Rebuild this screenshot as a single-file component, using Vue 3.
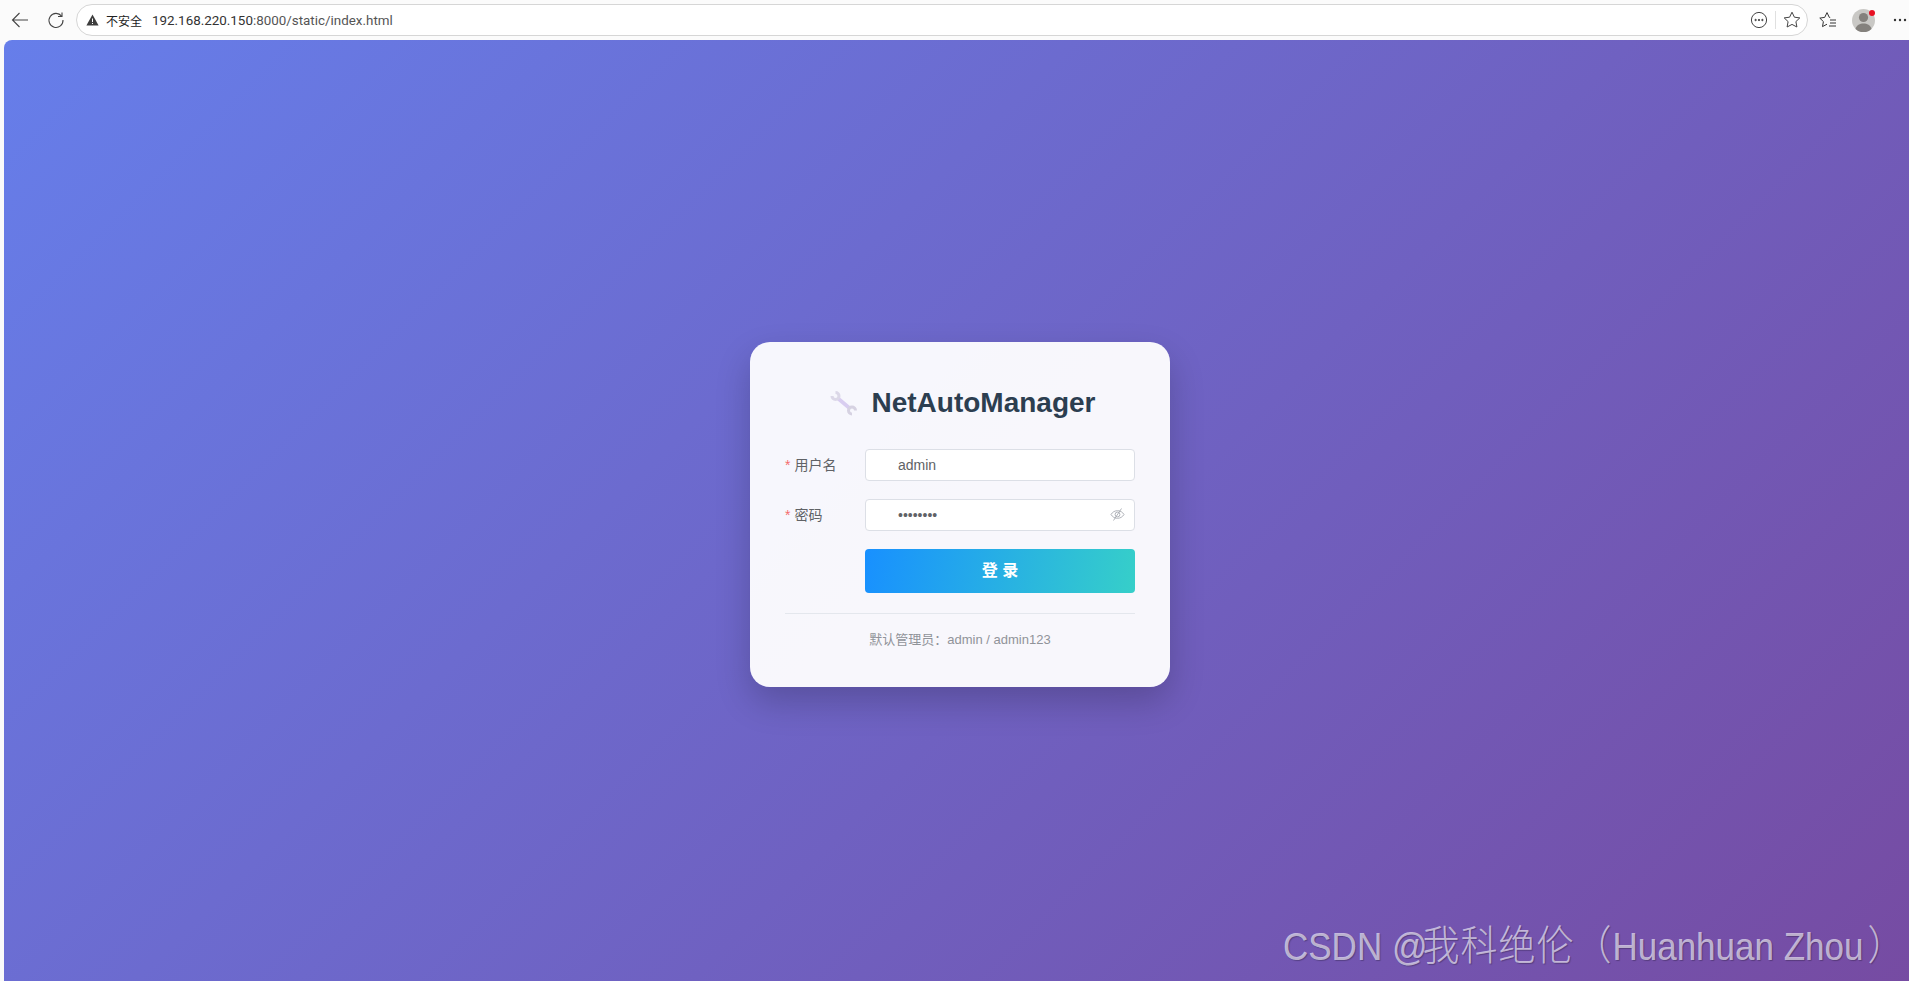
<script setup>
const fields = [
  { label: '用户名', type: 'text', value: 'admin' },
  { label: '密码', type: 'password', value: 'admin123', eye: true },
]
</script>

<template>
  <div class="window">
    <header class="toolbar">
      <button class="tool back" aria-label="后退">
        <svg width="20" height="20" viewBox="0 0 20 20" fill="none" stroke="#444" stroke-width="1.1"><path d="M18 10H2.500M9.500 3l-7 7 7 7"/></svg>
      </button>
      <button class="tool reload" aria-label="刷新">
        <svg width="18" height="18" viewBox="0 0 18 18" fill="none" stroke="#444" stroke-width="1.1"><path d="M14.600 5.200A7 7 0 1 0 16 9"/><path d="M15 1.500v4h-4"/></svg>
      </button>
      <div class="address">
        <svg class="warn" width="13" height="12" viewBox="0 0 13 12"><path d="M6.500.5 12.600 11.500H.4z" fill="#3d3d3d"/><path d="M6.500 4.500v3.500M6.500 9v1" stroke="#fff" stroke-width="1"/></svg>
        <span class="insecure">不安全</span>
        <span class="url">192.168.220.150<span class="port">:8000/static/index.html</span></span>
        <span class="spacer"></span>
        <svg class="addr-icon" width="18" height="18" viewBox="0 0 18 18" fill="none" stroke="#444" stroke-width="1"><circle cx="9" cy="9" r="7.600"/><circle cx="5.600" cy="9" r=".7" fill="#444"/><circle cx="9" cy="9" r=".7" fill="#444"/><circle cx="12.400" cy="9" r=".7" fill="#444"/></svg>
        <span class="sep"></span>
        <svg class="addr-icon" width="18" height="18" viewBox="0 0 18 18" fill="none" stroke="#444" stroke-width="1"><path d="M9 1.200l2.400 5 5.400.7-3.900 3.700 1 5.400L9 13.400l-4.900 2.600 1-5.400-3.900-3.700 5.400-.7z"/></svg>
      </div>
      <button class="tool fav" aria-label="收藏夹">
        <svg width="18" height="18" viewBox="0 0 18 18" fill="none" stroke="#333" stroke-width="1"><path d="M11.200 6.600l-.9-.2L8 1.600 5.700 6.400.8 7.100l3.600 3.500-.9 5 4.500-2.400"/><path d="M11 9h6M11 12h6M10 15h7"/></svg>
      </button>
      <div class="avatar">
        <svg width="23" height="23" viewBox="0 0 23 23"><circle cx="11.500" cy="11.500" r="11.500" fill="#c9c8c5"/><circle cx="11.500" cy="8.500" r="4.600" fill="#84817d"/><path d="M3.500 20c1-4 4.400-5.500 8-5.500s7 1.500 8 5.500a11.500 11.500 0 0 1-16 0z" fill="#84817d"/></svg>
        <span class="dot"></span>
      </div>
      <button class="tool more" aria-label="更多">
        <svg width="14" height="4" viewBox="0 0 14 4" fill="#333"><circle cx="2" cy="2" r="1.200"/><circle cx="7" cy="2" r="1.200"/><circle cx="12" cy="2" r="1.200"/></svg>
      </button>
    </header>

    <main class="stage">
      <section class="card">
        <h1 class="title">
          <svg class="wrench" width="28" height="28" viewBox="0 0 28 28" fill="none">
            <path d="M8.500 9l12.500 10.500" stroke="#d8cdf0" stroke-width="3.600"/>
            <path d="M6.500 3.500A3.500 3.500 0 1 1 3 7" stroke="#dcd8e8" stroke-width="3"/>
            <path d="M23 25A3.500 3.500 0 1 1 26.500 21.500" stroke="#d6d2e2" stroke-width="3"/>
          </svg>
          <span class="title-text">NetAutoManager</span>
        </h1>
        <form class="form" @submit.prevent>
          <div v-for="f in fields" :key="f.label" class="row">
            <label class="label"><i>*</i>{{ f.label }}</label>
            <div class="control">
              <input class="input" :type="f.type" :value="f.value" />
              <svg v-if="f.eye" class="eye" width="15" height="15" viewBox="0 0 15 15" fill="none" stroke="#a8abb2" stroke-width=".9"><path d="M1 7.500C2.500 5 4.800 3.700 7.500 3.700S12.500 5 14 7.500c-1.500 2.500-3.800 3.800-6.500 3.800S2.500 10 1 7.500z"/><circle cx="7.500" cy="7.500" r="2.400"/><path d="M11.500 1.500l-8 12"/></svg>
            </div>
          </div>
          <button class="submit" type="submit">登 录</button>
        </form>
        <div class="divider"></div>
        <p class="hint">默认管理员：admin / admin123</p>
      </section>
      <div class="watermark">CSDN @<span class="cjk">我科绝伦（</span>Huanhuan Zhou<span class="cjk close">）</span></div>
    </main>
  </div>
</template>

<style scoped>
.window {
  width: 1909px;
  height: 981px;
  overflow: hidden;
  background: #fafafa;
  font-family: "Liberation Sans", "Noto Sans CJK SC", sans-serif;
}
button { border: 0; background: none; padding: 0; cursor: pointer; }
.toolbar {
  height: 40px;
  box-sizing: border-box;
  padding: 4px 0 4px 10px;
  display: flex;
  align-items: center;
  background: #fbfbfb;
}
.tool { display: flex; align-items: center; justify-content: center; flex: none; }
.back { width: 20px; }
.reload { width: 18px; margin-left: 17px; }
.address {
  margin-left: 11px;
  width: 1732px;
  height: 32px;
  box-sizing: border-box;
  border: 1px solid #d6d6d6;
  border-radius: 16px;
  background: #fff;
  display: flex;
  align-items: center;
  padding: 0 6px 0 9px;
  flex: none;
}
.warn { flex: none; }
.insecure { margin-left: 7px; font-size: 12px; color: #222; }
.url { margin-left: 10px; font: 13.4px "Roboto", sans-serif; color: #333; }
.port { color: #555; }
.spacer { flex: 1; }
.sep { width: 1px; height: 18px; background: #e0e0e0; margin: 0 7px; }
.fav { margin-left: 11px; width: 18px; }
.avatar { position: relative; margin-left: 15px; width: 23px; height: 23px; flex: none; }
.dot { position: absolute; top: 1px; right: 0; width: 6px; height: 6px; border-radius: 50%; background: #e81123; }
.more { margin-left: 18px; width: 14px; }

.stage {
  position: relative;
  width: 1912px;
  height: 949px;
  margin-left: 4px;
  border-radius: 8px 0 0 0;
  background: linear-gradient(135deg, #667eea 0%, #764ba2 100%);
  display: flex;
  align-items: center;
  justify-content: center;
}
.card {
  width: 420px;
  box-sizing: border-box;
  padding: 46px 35px 39px;
  border-radius: 20px;
  background: rgba(255, 255, 255, 0.95);
  box-shadow: 0 15px 35px rgba(0, 0, 0, 0.2);
}
.title {
  margin: 0 0 29px;
  padding-left: 5px;
  height: 32px;
  display: flex;
  align-items: center;
  justify-content: center;
  gap: 14px;
  font-size: 28px;
  font-weight: 700;
  line-height: 32px;
  color: #2c3e50;
}
.title-text { padding-bottom: 2px; }
.wrench { flex: none; margin-top: -2px; }
.form { display: flex; flex-direction: column; gap: 18px; }
.row { display: flex; align-items: center; height: 32px; }
.label { width: 80px; flex: none; padding-bottom: 2px; font-size: 14px; color: #606266; }
.label i { font-style: normal; color: #f56c6c; margin-right: 4px; }
.control { position: relative; width: 270px; }
.input {
  display: block;
  width: 100%;
  height: 32px;
  box-sizing: border-box;
  border: 1px solid #dcdfe6;
  border-radius: 4px;
  padding: 0 30px 0 32px;
  background: #fff;
  font: 14px "Liberation Sans", sans-serif;
  color: #606266;
  outline: none;
}
.eye { position: absolute; top: 8px; right: 10px; }
.submit {
  margin: 0 0 0 80px;
  width: 270px;
  height: 44px;
  padding-bottom: 4px;
  border-radius: 4px;
  background: linear-gradient(100deg, #1890ff, #36cfc9);
  color: #fff;
  font: 700 16px "Liberation Sans", "Noto Sans CJK SC", sans-serif;
}
.divider { height: 1px; margin-top: 20px; background: #e4e7ed; }
.hint { margin: 18px 0 0; text-align: center; font-size: 13px; line-height: 16px; color: #909399; }
.watermark {
  position: absolute;
  left: 1279px;
  top: 885px;
  font-size: 35px;
  line-height: 44px;
  white-space: nowrap;
  color: rgba(255, 255, 255, 0.62);
  text-shadow: 1px 1px 1px rgba(0, 0, 0, 0.25);
  transform: scaleY(1.1);
  transform-origin: left center;
}
.cjk { font-size: 37px; font-weight: 300; margin-left: -5px; letter-spacing: 1px; }
.close { margin-left: 4px; }
</style>

<style>
html, body { margin: 0; overflow: hidden; }
</style>
